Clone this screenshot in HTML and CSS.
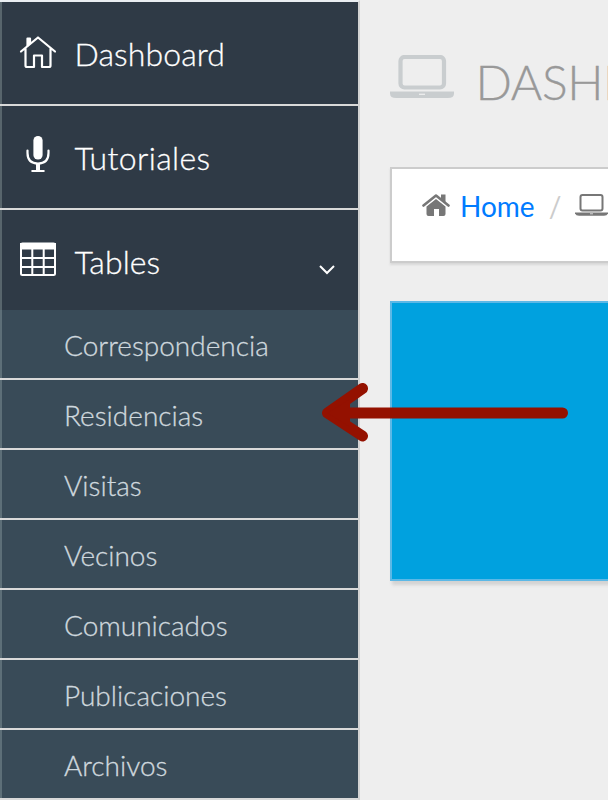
FILE: index.html
```html
<!DOCTYPE html>
<html lang="es">
<head>
<meta charset="utf-8">
<title>Dashboard</title>
<link rel="stylesheet" href="styles.css">
</head>
<body>
<div class="app">
  <nav class="sidebar">
    <a class="item">
      <svg class="icon" viewBox="0 0 36 36" fill="none" stroke="#fff" stroke-width="2.200" stroke-linejoin="round" stroke-linecap="round"><path d="M1 16.500 18 2.500 35 16.500M5.500 13.500V30.500Q5.500 32 7 32H14V20.500H22V32H29Q30.500 32 30.500 30.500V13.500"/><path d="M7.500 10.500V3.500H10V7.500Z" fill="#fff"/></svg>
      <span>Dashboard</span>
    </a>
    <a class="item spaced">
      <svg class="icon" viewBox="0 0 36 36" fill="none" stroke="#fff" stroke-width="2.200" stroke-linecap="round"><rect x="13.400" y="-3" width="9.200" height="23.500" rx="4.600" fill="#fff" stroke="none"/><path d="M7.500 11.500V14Q7.500 24.500 18 24.500T28.500 14V11.500M12.300 32H23.700"/><path d="M18 24.500V32" stroke-width="4" stroke-linecap="butt"/></svg>
      <span>Tutoriales</span>
    </a>
    <a class="item open">
      <svg class="icon" viewBox="0 0 36 36" fill="none" stroke="#fff" stroke-width="2"><rect x="1" y="1.500" width="34" height="31.500" rx="1.500"/><path d="M1 2H35V6.500H1Z" fill="#fff"/><path d="M12.300 7V33M23.700 7V33M1 16H35M1 25H35"/></svg>
      <span>Tables</span>
      <svg class="chevron" viewBox="0 0 18 12" fill="none" stroke="#fff" stroke-width="2"><path d="M2 2 9 9 16 2"/></svg>
    </a>
    <div class="submenu">
      <a class="sub">Correspondencia</a>
      <a class="sub">Residencias</a>
      <a class="sub">Visitas</a>
      <a class="sub">Vecinos</a>
      <a class="sub">Comunicados</a>
      <a class="sub">Publicaciones</a>
      <a class="sub">Archivos</a>
    </div>
  </nav>
  <main class="content">
    <h1 class="title">
      <svg class="title-icon" viewBox="0 0 64 44"><rect x="10.500" y="2" width="43.500" height="30.500" rx="4" fill="none" stroke="#c9cdcf" stroke-width="4.200"/><path d="M0 36.500H64V38.500Q64 43 58 43H6Q0 43 0 38.500Z" fill="#c9cdcf"/><path d="M29 39.300H35" stroke="#eee" stroke-width="1.300"/></svg>
      <span>DASHBOARD</span>
    </h1>
    <div class="breadcrumb">
      <svg class="crumb-home" viewBox="0 0 28 24"><path d="M4.500 13.500 14 6 23.500 13.500V21Q23.500 23 21.500 23H17V16H12V23H6.500Q4.500 23 4.500 21Z" fill="#777"/><path d="M1.500 12.500 14 2.500 26.500 12.500" fill="none" stroke="#fff" stroke-width="4.500"/><path d="M1.500 12.500 14 2.500 26.500 12.500" fill="none" stroke="#777" stroke-width="2.600" stroke-linecap="round" stroke-linejoin="round"/><path d="M19 1.500H23.500V9.500L19 6Z" fill="#777"/></svg>
      <a class="home-link">Home</a>
      <span class="slash">/</span>
      <svg class="crumb-laptop" viewBox="0 0 33 23"><rect x="5.500" y="1" width="22" height="15.500" rx="2" fill="none" stroke="#777" stroke-width="2"/><path d="M0 18.500H33V19.500Q32 21.800 29 21.800H4Q1 21.800 0 19.500Z" fill="#777"/><path d="M15 19.800H18" stroke="#fff" stroke-width=".7"/></svg>
    </div>
    <div class="panel"></div>
  </main>
  <svg class="arrow" viewBox="0 0 248 60" fill="none" stroke="#941100" stroke-width="11" stroke-linecap="round" stroke-linejoin="round"><path d="M242.500 31H9M42.500 6.500 7.500 31 42.500 54"/><path d="M7.500 31 30 17V45Z" fill="#941100" stroke="none"/></svg>
</div>
</body>
</html>
```

FILE: styles.css
```css
* { box-sizing: border-box; }
body {
  margin: 0;
  background: #eee;
  font-family: Lato, sans-serif;
  overflow: hidden;
}
.app {
  position: relative;
  display: flex;
  width: 608px;
  height: 800px;
  overflow: hidden;
}
.sidebar {
  flex: 0 0 360px;
  border-top: 2px solid #eaeef2;
  border-right: 2px solid #d3d3d3;
  font-weight: 300;
  -webkit-text-stroke: 0.3px;
}
.item {
  display: flex;
  align-items: center;
  height: 104px;
  padding: 0 22px 0 20px;
  background: linear-gradient(90deg, #58656c 2px, #2f3a46 2px);
  border-bottom: 2px solid #d9d9d9;
  color: #fff;
  font-size: 32px;
  letter-spacing: 0.1px;
}
.item.spaced { letter-spacing: 0.35px; }
.item.open {
  height: 100px;
  border-bottom: 0;
}
.item span {
  margin: 1px 0 0 18.5px;
}
.item.open span { margin-top: 3px; }
.icon {
  width: 36px;
  height: 36px;
  overflow: visible;
}
.chevron {
  width: 18px;
  height: 12px;
  margin: 19px 0 0 auto;
}
.sub {
  display: block;
  height: 70px;
  padding-left: 64px;
  background: linear-gradient(90deg, #5d6f78 2px, #394b58 2px);
  border-bottom: 2px solid #d9d9d9;
  color: #cfd8de;
  font-size: 28px;
  line-height: 70px;
}
.content {
  flex: 0 0 600px;
  padding: 55px 0 0 30px;
}
.title {
  display: flex;
  align-items: flex-start;
  height: 112px;
  margin: 0;
  color: #999;
  font-size: 48px;
  font-weight: 300;
  line-height: 54px;
  letter-spacing: -0.4px;
  -webkit-text-stroke: 0.3px;
}
.title-icon {
  width: 64px;
  height: 44px;
  margin-right: 21.5px;
}
.breadcrumb {
  display: flex;
  align-items: flex-start;
  height: 96px;
  padding: 22px 0 0 30px;
  border: 2px solid #ccc;
  background: #fff;
  box-shadow: 0 2px 2px #d8d8d8;
  font-size: 28px;
  line-height: 30px;
}
.crumb-home {
  width: 28px;
  height: 24px;
  margin-top: 2px;
}
.home-link {
  margin-left: 10px;
  color: #007bff;
}
.slash {
  margin-left: 14px;
  color: #ccc;
}
.crumb-laptop {
  width: 33px;
  height: 23px;
  margin: 3px 0 0 14px;
}
.panel {
  height: 280px;
  margin-top: 38px;
  background: #00a1df;
  border: 2px solid #5cb8e6;
  box-shadow: 2px 4px 3px #d3d3d3;
}
.arrow {
  position: absolute;
  left: 320px;
  top: 382px;
  width: 248px;
  height: 60px;
}
```
